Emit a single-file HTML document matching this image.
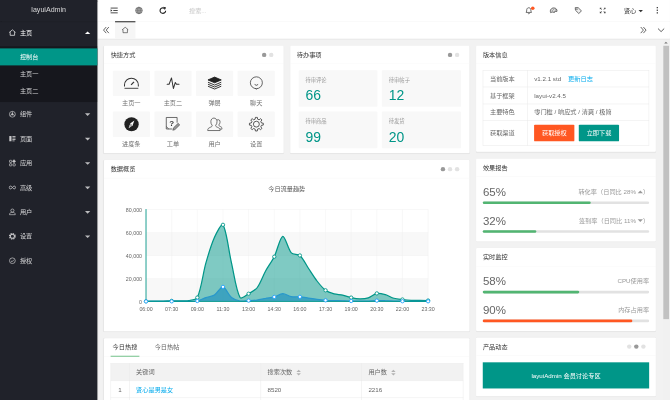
<!DOCTYPE html>
<html lang="zh-CN">
<head>
<meta charset="utf-8">
<title>layuiAdmin</title>
<style>
html,body{margin:0;padding:0;}
body{width:670px;height:400px;overflow:hidden;background:#f2f2f2;}
#app{position:absolute;left:0;top:0;width:1514px;height:918px;transform:scale(.4425,.436);transform-origin:0 0;overflow:hidden;filter:brightness(1);
 font-family:"Liberation Sans","Noto Sans CJK SC",sans-serif;font-size:14px;color:#666;line-height:24px;background:#f2f2f2;}
#app *{box-sizing:border-box;}
.abs{position:absolute;}
/* side */
#side{position:absolute;left:0;top:0;width:220px;height:918px;background:#20222A;color:rgba(255,255,255,.7);box-shadow:1px 0 2px rgba(0,0,0,.25);z-index:5;}
#logo{position:absolute;left:0;top:0;width:220px;height:49px;line-height:45px;text-align:center;font-size:16px;color:rgba(255,255,255,.8);box-shadow:0 1px 2px rgba(0,0,0,.15);}
.mi{position:absolute;left:0;width:220px;height:56px;line-height:56px;padding-left:45px;font-size:14px;color:rgba(255,255,255,.8);}
.mi svg{position:absolute;left:19px;top:19px;width:18px;height:18px;}
.mi .ar{position:absolute;right:16px;top:26px;width:0;height:0;border:6px solid transparent;border-top-color:rgba(255,255,255,.7);}
.mi .ar.up{top:19px;border-top-color:transparent;border-bottom-color:#fff;}
#child{position:absolute;left:0;top:106px;width:220px;height:128px;background:rgba(0,0,0,.3);}
.ci{position:absolute;left:0;width:220px;height:39px;line-height:39px;padding-left:45px;color:rgba(255,255,255,.8);}
.ci.on{background:#009688;color:#fff;}
/* header */
#header{position:absolute;left:220px;top:0;width:1294px;height:48.5px;background:#fff;border-bottom:1px solid #f6f6f6;}
.hi{position:absolute;top:13.5px;width:20px;height:20px;}
#tabs{position:absolute;left:220px;top:48.5px;width:1294px;height:40px;background:#fff;box-shadow:0 1px 2px 0 rgba(0,0,0,.1);z-index:3;}
/* cards */
.card{position:absolute;background:#fff;border-radius:2px;box-shadow:0 1px 2px 0 rgba(0,0,0,.05);}
.ch{position:absolute;left:0;top:0;right:0;height:42px;line-height:42px;padding:0 15px;border-bottom:1px solid #f6f6f6;color:#333;font-size:14px;}
.dots{position:absolute;top:16px;right:20px;height:10px;font-size:0;line-height:0;}
.dots i{display:inline-block;width:10px;height:10px;margin:0 3px;border-radius:50%;background:#e2e2e2;}
.dots i.on{background:#999;}
.tile{position:absolute;width:84.2px;height:58px;background:#f8f8f8;border-radius:2px;}
.tile svg{position:absolute;left:24px;top:11px;width:36px;height:36px;}
.tl{position:absolute;width:84.2px;height:24px;line-height:24px;text-align:center;color:#707070;font-size:14px;}
.bl{position:absolute;width:178.3px;height:84px;background:#f8f8f8;border-radius:2px;padding:10px 15px;color:#999;}
.bl h3{margin:0;padding:0 0 10px;font-size:12px;font-weight:normal;line-height:24px;color:#999;}
.bl p{margin:0;font-size:31.5px;line-height:29px;color:#009688;font-weight:300;}
table{border-collapse:collapse;border-spacing:0;}
#vt{position:absolute;left:15px;top:55.5px;width:375.7px;}
#vt td{border:1px solid #e6e6e6;padding:8px 15px;line-height:20px;font-size:14px;color:#666;height:38.5px;}
#vt a{color:#01AAED;text-decoration:none;}
.btn{display:inline-block;height:38px;line-height:38px;padding:0 17.5px;background:#009688;color:#fff;font-size:14px;border-radius:2px;vertical-align:middle;}
.btn.dg{background:#FF5722;}
.btn+.btn{margin-left:10px;}
.pg{position:absolute;left:15px;right:15px;height:6px;border-radius:20px;background:#e2e2e2;}
.pg b{position:absolute;left:0;top:0;height:6px;border-radius:20px;background:#52B572;}
.pt{position:absolute;left:15px;font-size:26px;line-height:26px;color:#666;}
.ph{position:absolute;right:15px;font-size:14px;line-height:24px;color:#999;}
.edge{display:inline-block;width:0;height:0;border:6px solid transparent;vertical-align:middle;}
.ax{font-size:12px;fill:#666;font-family:"Liberation Sans",sans-serif;}
.ttl{font-size:14px;fill:#555;font-family:"Liberation Sans","Noto Sans CJK SC",sans-serif;}
#ht{position:absolute;left:15px;top:57px;width:796.5px;}
#ht th,#ht td{border:1px solid #e6e6e6;height:39.6px;padding:0 15px;font-size:14px;color:#666;font-weight:normal;text-align:left;line-height:28px;}
#ht th{background:#f2f2f2;}
#ht a{color:#01AAED;text-decoration:none;}
.sort{display:inline-block;position:relative;width:10px;height:20px;margin-left:9px;vertical-align:middle;}
.sort:before,.sort:after{content:"";position:absolute;left:0;border:5px solid transparent;}
.sort:before{top:-2px;border-bottom-color:#b2b2b2;}
.sort:after{top:11px;border-top-color:#b2b2b2;}
</style>
</head>
<body>
<div id="app">

<!-- ============ SIDE ============ -->
<div id="side">
  <div id="logo">layuiAdmin</div>
  <div class="mi" style="top:47px;color:#fff">
    <svg viewBox="0 0 18 18" fill="none" stroke="#fff" stroke-width="1.6" stroke-linejoin="round"><path d="M9 2.5 15.5 8 14 8 14 15 4 15 4 8 2.5 8Z"/></svg>
    主页<span class="ar up"></span></div>
  <div id="child">
    <div class="ci on" style="top:4.5px">控制台</div>
    <div class="ci" style="top:44px">主页一</div>
    <div class="ci" style="top:83px">主页二</div>
  </div>
  <div class="mi" style="top:234px">
    <svg viewBox="0 0 18 18" fill="none" stroke="#c8c8ca" stroke-width="1.5"><circle cx="9" cy="9" r="6.7"/><path d="M9 9 9 2.5M9 9 3.2 12.2M9 9 14.8 12.2"/><circle cx="9" cy="9" r="1.8" fill="#c8c8ca"/></svg>
    组件<span class="ar"></span></div>
  <div class="mi" style="top:290px">
    <svg viewBox="0 0 18 18" fill="#c8c8ca"><rect x="2" y="3" width="5" height="12"/><rect x="9" y="3" width="7" height="2"/><rect x="9" y="6.5" width="7" height="2"/><rect x="9" y="10" width="7" height="2"/><rect x="9" y="13.3" width="5" height="1.7"/></svg>
    页面<span class="ar"></span></div>
  <div class="mi" style="top:346px">
    <svg viewBox="0 0 18 18" fill="none" stroke="#c8c8ca" stroke-width="1.6"><rect x="2.5" y="2.5" width="5" height="5" rx="1"/><rect x="2.5" y="10.5" width="5" height="5" rx="1"/><rect x="10.5" y="10.5" width="5" height="5" rx="1"/><rect x="10.2" y="2.2" width="5" height="5" rx="1" transform="rotate(45 12.7 4.7)" fill="#c8c8ca"/></svg>
    应用<span class="ar"></span></div>
  <div class="mi" style="top:402px">
    <svg viewBox="0 0 18 18" fill="none" stroke="#c8c8ca" stroke-width="1.9"><path d="M9 9C7.6 6.8 6.4 5.8 4.8 5.8 3 5.8 1.8 7.2 1.8 9 1.8 10.800000000000001 3 12.2 4.8 12.2 6.4 12.2 7.6 11.2 9 9 10.4 6.8 11.6 5.8 13.2 5.8 15 5.8 16.2 7.2 16.2 9 16.2 10.8 15 12.2 13.2 12.2 11.6 12.2 10.4 11.2 9 9Z"/></svg>
    高级<span class="ar"></span></div>
  <div class="mi" style="top:458px">
    <svg viewBox="0 0 18 18" fill="none" stroke="#c8c8ca" stroke-width="1.6"><circle cx="9" cy="6" r="3.6"/><path d="M2.5 15.5 C2.5 11 5.5 10 9 10 C12.5 10 15.5 11 15.5 15.5Z"/></svg>
    用户<span class="ar"></span></div>
  <div class="mi" style="top:514px">
    <svg viewBox="0 0 18 18" fill="none" stroke="#c8c8ca"><circle cx="9" cy="9" r="6.6" stroke-width="2.4" stroke-dasharray="2.9 2.283"/><circle cx="9" cy="9" r="4.7" stroke-width="2.3"/></svg>
    设置<span class="ar"></span></div>
  <div class="mi" style="top:570px">
    <svg viewBox="0 0 18 18" fill="none" stroke="#c8c8ca" stroke-width="1.6"><circle cx="9" cy="9" r="6.5"/><path d="M5.8 9.2 8.2 11.5 12.4 6.8"/></svg>
    授权</div>
</div>

<!-- ============ HEADER ============ -->
<div id="header">
  <!-- flexible -->
  <svg class="hi" style="left:28px" viewBox="0 0 20 20" fill="#333"><rect x="2" y="3.5" width="16" height="2"/><rect x="8" y="9" width="10" height="2"/><rect x="2" y="14.5" width="16" height="2"/><path d="M2 7.2 6 10 2 12.8Z"/></svg>
  <!-- website -->
  <svg class="hi" style="left:84px" viewBox="0 0 20 20" fill="none" stroke="#555" stroke-width="1"><circle cx="10" cy="10" r="7.6" fill="#c4c4c4" stroke-width="1.3"/><ellipse cx="10" cy="10" rx="3.6" ry="7.5"/><path d="M2.5 10H17.5M3.5 6.3H16.5M3.5 13.7H16.5M10 2.5V17.5"/></svg>
  <!-- refresh -->
  <svg class="hi" style="left:138px" viewBox="0 0 20 20" fill="none" stroke="#222" stroke-width="2.5"><path d="M16.3 10.5A6.3 6.3 0 1 1 13 4.8"/><path d="M10.8 1.4 17.4 3 14.4 9Z" fill="#222" stroke="none"/></svg>
  <div class="abs" style="left:207px;top:13px;font-size:14px;color:#c8c8c8;line-height:24px">搜索...</div>

  <!-- notice -->
  <svg class="hi" style="left:965px" viewBox="0 0 20 20" fill="none" stroke="#333" stroke-width="1.6"><path d="M4 14.5C5.5 13 5 10 5.5 7.5 6 5 8 3.8 10 3.8 12 3.8 14 5 14.5 7.5 15 10 14.5 13 16 14.5Z" stroke-linejoin="round"/><path d="M8 16.8Q10 18.5 12 16.8"/></svg>
  <div class="abs" style="left:979.5px;top:15px;width:8px;height:8px;border-radius:50%;background:#FF5722"></div>
  <!-- theme -->
  <svg class="hi" style="left:1021px" viewBox="0 0 20 20" fill="none" stroke="#333" stroke-width="1.6"><path d="M3.4 15C1 9 5 4.2 10.5 4.2 15.5 4.2 18.6 8 17.6 12.2L13 11.6 12 14.6 6.6 13.4Z" fill="#ddd" stroke-linejoin="round"/><circle cx="7" cy="9.6" r=".9" fill="#333" stroke="none"/><circle cx="10.4" cy="7.4" r=".9" fill="#333" stroke="none"/><circle cx="14" cy="8.6" r=".9" fill="#333" stroke="none"/></svg>
  <!-- note -->
  <svg class="hi" style="left:1077px" viewBox="0 0 20 20" fill="none" stroke="#333" stroke-width="1.6" stroke-linejoin="round"><path d="M3 3.5H9.5L17 11 11 17 3.5 9.5Z" fill="#eee"/><circle cx="6.8" cy="7" r="1.1" fill="#fff" stroke-width="1.2"/></svg>
  <!-- fullscreen -->
  <svg class="hi" style="left:1132px" viewBox="0 0 20 20" fill="#444"><path d="M3.5 3.5H7.5L6.2 4.8 8.4 7 7 8.4 4.8 6.2 3.5 7.5Z"/><path d="M16.5 3.5V7.5L15.2 6.2 13 8.4 11.6 7 13.8 4.8 12.5 3.5Z"/><path d="M3.5 16.5V12.5L4.8 13.8 7 11.6 8.4 13 6.2 15.2 7.5 16.5Z"/><path d="M16.5 16.5H12.5L13.8 15.2 11.6 13 13 11.6 15.2 13.8 16.5 12.5Z"/></svg>
  <div class="abs" style="left:1190px;top:13px;font-size:14px;color:#333;line-height:24px">贤心</div>
  <div class="abs" style="left:1223px;top:23px;width:0;height:0;border:5px solid transparent;border-top-color:#333"></div>
  <div class="abs" style="left:1264.2px;top:16px;width:2.6px;height:2.6px;background:#444;box-shadow:0 6px 0 #444,0 12px 0 #444"></div>
</div>

<!-- ============ TABS ============ -->
<div id="tabs">
  <svg class="abs" style="left:11px;top:11px;width:18px;height:18px" viewBox="0 0 18 18" fill="none" stroke="#333" stroke-width="1.7"><path d="M9 2 3 9 9 16M15 2 9 9 15 16"/></svg>
  <div class="abs" style="left:40px;top:0;width:46px;height:40px;background:#f6f6f6;border-top:2px solid #000"></div>
  <svg class="abs" style="left:54px;top:11px;width:18px;height:18px" viewBox="0 0 18 18" fill="none" stroke="#333" stroke-width="1.4" stroke-linejoin="round"><path d="M9 2.5 15.5 8 14 8 14 15 4 15 4 8 2.5 8Z"/></svg>
  <svg class="abs" style="left:1225px;top:11px;width:18px;height:18px" viewBox="0 0 18 18" fill="none" stroke="#333" stroke-width="1.7"><path d="M3 2 9 9 3 16M9 2 15 9 9 16"/></svg>
  <svg class="abs" style="left:1265px;top:11px;width:18px;height:18px" viewBox="0 0 18 18" fill="none" stroke="#333" stroke-width="1.8"><path d="M2 5.5 9 12.5 16 5.5"/></svg>
</div>

<!-- ============ BODY ============ -->
<!-- card1 shortcuts -->
<div class="card" style="left:235px;top:105px;width:405.7px;height:245.5px">
  <div class="ch">快捷方式<span class="dots"><i class="on"></i><i></i></span></div>
  <div class="tile" style="left:19.5px;top:56.5px"><svg viewBox="0 0 30 30" fill="none" stroke="#333" stroke-width="1.9"><path d="M2 21.3V18.3A13 13 0 0 1 28 18.3V21.3"/><path d="M2 24.6H28" stroke-width="1.7"/><path d="M14.4 18.2 19.8 12.2" stroke-width="2.3"/></svg></div>
  <div class="tile" style="left:113.7px;top:56.5px"><svg viewBox="0 0 30 30" fill="none" stroke="#333" stroke-width="1.9" stroke-linejoin="round" stroke-linecap="round"><path d="M3.8 16.9H7.6L12.1 4.8 15.7 25 19.3 13.3 21.5 16.9H26.4"/></svg></div>
  <div class="tile" style="left:207.9px;top:56.5px"><svg viewBox="0 0 30 30" fill="none" stroke="#222" stroke-width="1.7" stroke-linejoin="round"><path d="M15 3.2 27.5 8.6 15 14 2.5 8.6Z" fill="#222"/><path d="M2.5 13 15 18.4 27.5 13M2.5 16.8 15 22.2 27.5 16.8M2.5 20.6 15 26 27.5 20.6"/></svg></div>
  <div class="tile" style="left:302.1px;top:56.5px"><svg viewBox="0 0 30 30" fill="none" stroke="#333" stroke-width="1.4"><circle cx="15.3" cy="14" r="11.3"/><path d="M13.6 24.8 15.3 26.6 17 24.8" stroke-width="1.2"/><path d="M12 17.2Q15.3 20.6 18.6 17.2" stroke-width="1.5"/></svg></div>
  <div class="tl" style="left:19.5px;top:118px">主页一</div>
  <div class="tl" style="left:113.7px;top:118px">主页二</div>
  <div class="tl" style="left:207.9px;top:118px">弹层</div>
  <div class="tl" style="left:302.1px;top:118px">聊天</div>

  <div class="tile" style="left:19.5px;top:151px"><svg viewBox="0 0 30 30"><circle cx="15.2" cy="15" r="13.5" fill="#222"/><path d="M20.6 7.6 17.3 17.1 9.8 22.4 13.1 12.9Z" fill="#fff"/><path d="M13.1 12.9 17.3 17.1 9.8 22.4Z" fill="#aaa"/></svg></div>
  <div class="tile" style="left:113.7px;top:151px"><svg viewBox="0 0 30 30" fill="none" stroke="#444" stroke-width="1.5" stroke-linejoin="round"><path d="M22.7 12V2H2.3V24H7L2.3 19.5M7 24H13"/><path d="M14.6 26.4 15.6 22.2 24.6 13.2 27.6 16.2 18.6 25.2Z" fill="#999" stroke-width="1.2"/><text x="8" y="18" font-size="15" font-family="Liberation Sans,sans-serif" font-weight="bold" fill="#333" stroke="none">?</text></svg></div>
  <div class="tile" style="left:207.9px;top:151px"><svg viewBox="0 0 30 30" fill="none" stroke="#444" stroke-width="1.4" stroke-linejoin="round"><path d="M19.5 7C22.6 4.8 26 7.4 25.2 11.4 24.8 13.8 24 15.2 23 16.1 22.8 17.5 23.4 18.2 25.8 19.3 28.4 20.4 29.2 21.6 29.2 24.2H25"/><path d="M2 27C2 23.4 3.2 22.5 7.2 20.7 10.1 19.4 10.8 18.5 10.3 16.9 8.8 15.3 7.9 13.1 7.9 10.2 7.9 5.9 10.3 3.2 13.7 3.2 17.1 3.2 19.5 5.9 19.5 10.2 19.5 13.1 18.6 15.3 17.1 16.9 16.6 18.5 17.3 19.4 20.2 20.7 24.2 22.5 25.4 23.4 25.4 27Z"/></svg></div>
  <div class="tile" style="left:302.1px;top:151px"><svg viewBox="0 0 30 30" fill="none" stroke="#333" stroke-width="1.5" stroke-linejoin="round"><circle cx="15.3" cy="14.8" r="5.6"/><path d="M13.01 5.27L13.54 1.72L17.06 1.72L17.59 5.27L20.42 6.44L23.31 4.31L25.79 6.79L23.66 9.68L24.83 12.51L28.38 13.04L28.38 16.56L24.83 17.09L23.66 19.92L25.79 22.81L23.31 25.29L20.42 23.16L17.59 24.33L17.06 27.88L13.54 27.88L13.01 24.33L10.18 23.16L7.29 25.29L4.81 22.81L6.94 19.92L5.77 17.09L2.22 16.56L2.22 13.04L5.77 12.51L6.94 9.68L4.81 6.79L7.29 4.31L10.18 6.44Z"/></svg></div>
  <div class="tl" style="left:19.5px;top:212px">进度条</div>
  <div class="tl" style="left:113.7px;top:212px">工单</div>
  <div class="tl" style="left:207.9px;top:212px">用户</div>
  <div class="tl" style="left:302.1px;top:212px">设置</div>
</div>

<!-- card2 backlog -->
<div class="card" style="left:655.7px;top:105px;width:405.6px;height:245.5px">
  <div class="ch">待办事项<span class="dots"><i class="on"></i><i></i></span></div>
  <div class="bl" style="left:19.5px;top:56px"><h3>待审评论</h3><p>66</p></div>
  <div class="bl" style="left:207.8px;top:56px"><h3>待审帖子</h3><p>12</p></div>
  <div class="bl" style="left:19.5px;top:150.5px"><h3>待审商品</h3><p>99</p></div>
  <div class="bl" style="left:207.8px;top:150.5px"><h3>待发货</h3><p>20</p></div>
</div>

<!-- card3 version -->
<div class="card" style="left:1076.3px;top:105px;width:405.7px;height:243px">
  <div class="ch">版本信息</div>
  <table id="vt">
    <colgroup><col style="width:100px"><col></colgroup>
    <tr><td>当前版本</td><td>v1.2.1 std <a style="margin-left:12px">更新日志</a></td></tr>
    <tr><td>基于框架</td><td>layui-v2.4.5</td></tr>
    <tr><td>主要特色</td><td>零门槛 / 响应式 / 清爽 / 极简</td></tr>
    <tr><td style="height:57px">获取渠道</td><td style="height:57px"><span class="btn dg">获取授权</span><span class="btn">立即下载</span></td></tr>
  </table>
</div>

<!-- card4 report -->
<div class="card" style="left:1076.3px;top:364px;width:405.7px;height:190px">
  <div class="ch">效果报告</div>
  <div class="pt" style="top:63px">65%</div>
  <div class="ph" style="top:64px">转化率（日同比 28% <span class="edge" style="border-bottom-color:#999;margin-top:-8px"></span>）</div>
  <div class="pg" style="top:98px"><b style="width:65%"></b></div>
  <div class="pt" style="top:128.5px">32%</div>
  <div class="ph" style="top:129.5px">签到率（日同比 11% <span class="edge" style="border-top-color:#999;margin-top:4px"></span>）</div>
  <div class="pg" style="top:163.5px"><b style="width:32%"></b></div>
</div>

<!-- card5 monitor -->
<div class="card" style="left:1076.3px;top:569px;width:405.7px;height:190px">
  <div class="ch">实时监控</div>
  <div class="pt" style="top:63px">58%</div>
  <div class="ph" style="top:64px">CPU使用率</div>
  <div class="pg" style="top:98px"><b style="width:58%"></b></div>
  <div class="pt" style="top:128.5px">90%</div>
  <div class="ph" style="top:129.5px">内存占用率</div>
  <div class="pg" style="top:163.5px"><b style="width:90%;background:#FF5722"></b></div>
</div>

<!-- card6 news -->
<div class="card" style="left:1076.3px;top:774px;width:405.7px;height:134.5px">
  <div class="ch">产品动态<span class="dots"><i></i><i class="on"></i><i></i></span></div>
  <div class="abs" style="left:15px;right:15px;top:57px;height:60px;line-height:60px;text-align:center;background:#009688;color:#fff;font-size:14px">layuiAdmin 会员讨论专区</div>
</div>

<!-- card7 chart -->
<div class="card" style="left:235px;top:367px;width:826.3px;height:393px">
  <div class="ch">数据概览<span class="dots"><i class="on"></i><i></i><i></i></span></div>
</div>
<svg class="abs" style="left:0;top:0;width:1514px;height:918px;pointer-events:none" viewBox="0 0 1514 918">
<rect x="330.0" y="638.6" width="637.5" height="52.7" fill="#f8f8f8"/>
<rect x="330.0" y="585.9" width="637.5" height="52.7" fill="#ffffff"/>
<rect x="330.0" y="533.2" width="637.5" height="52.7" fill="#f8f8f8"/>
<rect x="330.0" y="480.5" width="637.5" height="52.7" fill="#ffffff"/>
<line x1="330.0" y1="638.6" x2="967.5" y2="638.6" stroke="#eee" stroke-width="1"/>
<line x1="330.0" y1="585.9" x2="967.5" y2="585.9" stroke="#eee" stroke-width="1"/>
<line x1="330.0" y1="533.2" x2="967.5" y2="533.2" stroke="#eee" stroke-width="1"/>
<line x1="330.0" y1="480.5" x2="967.5" y2="480.5" stroke="#eee" stroke-width="1"/>
<line x1="330.0" y1="480.5" x2="330.0" y2="691.3" stroke="#eee" stroke-width="1"/>
<line x1="388.0" y1="480.5" x2="388.0" y2="691.3" stroke="#eee" stroke-width="1"/>
<line x1="445.9" y1="480.5" x2="445.9" y2="691.3" stroke="#eee" stroke-width="1"/>
<line x1="503.9" y1="480.5" x2="503.9" y2="691.3" stroke="#eee" stroke-width="1"/>
<line x1="561.8" y1="480.5" x2="561.8" y2="691.3" stroke="#eee" stroke-width="1"/>
<line x1="619.8" y1="480.5" x2="619.8" y2="691.3" stroke="#eee" stroke-width="1"/>
<line x1="677.7" y1="480.5" x2="677.7" y2="691.3" stroke="#eee" stroke-width="1"/>
<line x1="735.7" y1="480.5" x2="735.7" y2="691.3" stroke="#eee" stroke-width="1"/>
<line x1="793.6" y1="480.5" x2="793.6" y2="691.3" stroke="#eee" stroke-width="1"/>
<line x1="851.6" y1="480.5" x2="851.6" y2="691.3" stroke="#eee" stroke-width="1"/>
<line x1="909.5" y1="480.5" x2="909.5" y2="691.3" stroke="#eee" stroke-width="1"/>
<line x1="967.5" y1="480.5" x2="967.5" y2="691.3" stroke="#eee" stroke-width="1"/>
<path d="M330.0 691.0C330.0 691.0 343.5 690.8 349.3 690.7C355.1 690.6 362.8 690.5 368.6 690.4C374.4 690.3 382.2 690.2 388.0 690.1C393.8 690.0 401.5 689.9 407.3 689.8C413.1 689.7 421.0 690.6 426.6 689.5C432.6 688.4 443.6 687.7 445.9 682.5C455.2 661.9 458.6 627.0 465.2 603.5C470.2 585.7 477.2 561.7 484.5 544.9C488.7 535.4 500.6 510.7 503.9 515.6C512.2 528.3 517.1 577.2 523.2 603.5C528.7 627.2 533.3 665.8 542.5 682.5C544.9 686.9 556.3 676.9 561.8 673.7C567.9 670.2 577.0 665.6 581.1 660.0C588.6 649.7 594.2 632.5 600.5 621.0C605.8 611.1 614.8 598.9 619.8 588.8C626.4 575.2 632.8 543.4 639.1 542.0C644.4 540.8 650.5 571.1 658.4 580.0C662.1 584.3 673.5 582.1 677.7 585.9C685.1 592.6 691.2 606.4 697.0 615.2C702.8 624.0 710.0 636.1 716.4 644.5C721.6 651.3 729.0 660.7 735.7 665.8C740.6 669.6 749.0 672.3 755.0 674.0C760.6 675.6 768.6 675.4 774.3 676.7C780.2 678.0 787.7 681.2 793.6 682.5C799.3 683.8 807.1 685.4 813.0 685.4C818.7 685.5 826.8 684.9 832.3 683.1C838.4 681.1 845.5 674.0 851.6 672.9C857.1 671.8 865.3 674.2 870.9 675.8C876.9 677.5 884.2 682.3 890.2 684.0C895.8 685.6 903.7 686.2 909.5 686.9C915.3 687.6 923.1 688.4 928.9 688.7C934.6 689.0 942.4 688.9 948.2 689.0C954.0 689.0 967.5 689.3 967.5 689.3L967.5 691.3L330.0 691.3Z" fill="rgba(0,150,136,0.5)" stroke="none"/>
<path d="M330.0 691.0C330.0 691.0 343.5 690.8 349.3 690.7C355.1 690.6 362.8 690.5 368.6 690.4C374.4 690.3 382.2 690.2 388.0 690.1C393.8 690.0 401.5 689.9 407.3 689.8C413.1 689.7 421.0 690.6 426.6 689.5C432.6 688.4 443.6 687.7 445.9 682.5C455.2 661.9 458.6 627.0 465.2 603.5C470.2 585.7 477.2 561.7 484.5 544.9C488.7 535.4 500.6 510.7 503.9 515.6C512.2 528.3 517.1 577.2 523.2 603.5C528.7 627.2 533.3 665.8 542.5 682.5C544.9 686.9 556.3 676.9 561.8 673.7C567.9 670.2 577.0 665.6 581.1 660.0C588.6 649.7 594.2 632.5 600.5 621.0C605.8 611.1 614.8 598.9 619.8 588.8C626.4 575.2 632.8 543.4 639.1 542.0C644.4 540.8 650.5 571.1 658.4 580.0C662.1 584.3 673.5 582.1 677.7 585.9C685.1 592.6 691.2 606.4 697.0 615.2C702.8 624.0 710.0 636.1 716.4 644.5C721.6 651.3 729.0 660.7 735.7 665.8C740.6 669.6 749.0 672.3 755.0 674.0C760.6 675.6 768.6 675.4 774.3 676.7C780.2 678.0 787.7 681.2 793.6 682.5C799.3 683.8 807.1 685.4 813.0 685.4C818.7 685.5 826.8 684.9 832.3 683.1C838.4 681.1 845.5 674.0 851.6 672.9C857.1 671.8 865.3 674.2 870.9 675.8C876.9 677.5 884.2 682.3 890.2 684.0C895.8 685.6 903.7 686.2 909.5 686.9C915.3 687.6 923.1 688.4 928.9 688.7C934.6 689.0 942.4 688.9 948.2 689.0C954.0 689.0 967.5 689.3 967.5 689.3" fill="none" stroke="#009688" stroke-width="2.8"/>
<path d="M330.0 691.3C330.0 691.3 343.5 691.3 349.3 691.2C355.1 691.2 362.8 691.2 368.6 691.2C374.4 691.2 382.2 691.2 388.0 691.2C393.8 691.2 401.5 691.2 407.3 691.2C413.1 691.1 420.8 691.2 426.6 691.1C432.4 691.0 440.3 691.3 445.9 690.4C451.9 689.1 459.3 684.6 465.2 682.5C470.9 680.5 479.6 679.8 484.5 676.7C491.2 672.4 498.5 657.1 503.9 657.9C510.1 658.9 516.2 676.7 523.2 682.5C527.8 686.4 536.5 689.3 542.5 690.4C548.1 691.3 556.0 689.9 561.8 689.5C567.6 689.2 575.4 689.0 581.1 688.2C587.0 687.4 594.6 685.3 600.5 684.3C606.2 683.2 614.1 682.6 619.8 681.1C625.7 679.4 633.3 673.9 639.1 673.7C644.8 673.6 652.5 679.1 658.4 680.2C664.1 681.2 672.0 680.2 677.7 680.8C683.6 681.3 691.2 682.8 697.0 683.7C702.8 684.6 710.6 685.9 716.4 686.6C722.1 687.4 729.9 688.3 735.7 688.8C741.5 689.2 749.2 689.4 755.0 689.6C760.8 689.7 768.5 689.7 774.3 689.8C780.1 690.0 787.8 690.3 793.6 690.4C799.4 690.6 807.2 690.7 813.0 690.7C818.7 690.7 826.5 690.7 832.3 690.5C838.1 690.3 845.8 689.6 851.6 689.5C857.4 689.3 865.1 689.6 870.9 689.8C876.7 689.9 884.4 690.4 890.2 690.6C896.0 690.7 903.7 690.8 909.5 690.9C915.3 690.9 923.1 691.0 928.9 691.0C934.7 691.1 942.4 691.1 948.2 691.1C954.0 691.1 967.5 691.1 967.5 691.1L967.5 691.3L330.0 691.3Z" fill="rgba(0,128,190,0.5)" stroke="none"/>
<path d="M330.0 691.3C330.0 691.3 343.5 691.3 349.3 691.2C355.1 691.2 362.8 691.2 368.6 691.2C374.4 691.2 382.2 691.2 388.0 691.2C393.8 691.2 401.5 691.2 407.3 691.2C413.1 691.1 420.8 691.2 426.6 691.1C432.4 691.0 440.3 691.3 445.9 690.4C451.9 689.1 459.3 684.6 465.2 682.5C470.9 680.5 479.6 679.8 484.5 676.7C491.2 672.4 498.5 657.1 503.9 657.9C510.1 658.9 516.2 676.7 523.2 682.5C527.8 686.4 536.5 689.3 542.5 690.4C548.1 691.3 556.0 689.9 561.8 689.5C567.6 689.2 575.4 689.0 581.1 688.2C587.0 687.4 594.6 685.3 600.5 684.3C606.2 683.2 614.1 682.6 619.8 681.1C625.7 679.4 633.3 673.9 639.1 673.7C644.8 673.6 652.5 679.1 658.4 680.2C664.1 681.2 672.0 680.2 677.7 680.8C683.6 681.3 691.2 682.8 697.0 683.7C702.8 684.6 710.6 685.9 716.4 686.6C722.1 687.4 729.9 688.3 735.7 688.8C741.5 689.2 749.2 689.4 755.0 689.6C760.8 689.7 768.5 689.7 774.3 689.8C780.1 690.0 787.8 690.3 793.6 690.4C799.4 690.6 807.2 690.7 813.0 690.7C818.7 690.7 826.5 690.7 832.3 690.5C838.1 690.3 845.8 689.6 851.6 689.5C857.4 689.3 865.1 689.6 870.9 689.8C876.7 689.9 884.4 690.4 890.2 690.6C896.0 690.7 903.7 690.8 909.5 690.9C915.3 690.9 923.1 691.0 928.9 691.0C934.7 691.1 942.4 691.1 948.2 691.1C954.0 691.1 967.5 691.1 967.5 691.1" fill="none" stroke="#2898cc" stroke-width="2.8"/>
<line x1="330.0" y1="479.5" x2="330.0" y2="692.3" stroke="#009688" stroke-width="2"/>
<line x1="329.0" y1="691.3" x2="968.5" y2="691.3" stroke="#009688" stroke-width="2"/>
<circle cx="330.0" cy="691.0" r="3.8" fill="#fff" stroke="#009688" stroke-width="2"/>
<circle cx="388.0" cy="690.1" r="3.8" fill="#fff" stroke="#009688" stroke-width="2"/>
<circle cx="445.9" cy="682.5" r="3.8" fill="#fff" stroke="#009688" stroke-width="2"/>
<circle cx="503.9" cy="515.6" r="3.8" fill="#fff" stroke="#009688" stroke-width="2"/>
<circle cx="561.8" cy="673.7" r="3.8" fill="#fff" stroke="#009688" stroke-width="2"/>
<circle cx="619.8" cy="588.8" r="3.8" fill="#fff" stroke="#009688" stroke-width="2"/>
<circle cx="677.7" cy="585.9" r="3.8" fill="#fff" stroke="#009688" stroke-width="2"/>
<circle cx="735.7" cy="665.8" r="3.8" fill="#fff" stroke="#009688" stroke-width="2"/>
<circle cx="793.6" cy="682.5" r="3.8" fill="#fff" stroke="#009688" stroke-width="2"/>
<circle cx="851.6" cy="672.9" r="3.8" fill="#fff" stroke="#009688" stroke-width="2"/>
<circle cx="909.5" cy="686.9" r="3.8" fill="#fff" stroke="#009688" stroke-width="2"/>
<circle cx="967.5" cy="689.3" r="3.8" fill="#fff" stroke="#009688" stroke-width="2"/>
<circle cx="330.0" cy="691.3" r="3.8" fill="#fff" stroke="#1E9FFF" stroke-width="2"/>
<circle cx="388.0" cy="691.2" r="3.8" fill="#fff" stroke="#1E9FFF" stroke-width="2"/>
<circle cx="445.9" cy="690.4" r="3.8" fill="#fff" stroke="#1E9FFF" stroke-width="2"/>
<circle cx="503.9" cy="657.9" r="3.8" fill="#fff" stroke="#1E9FFF" stroke-width="2"/>
<circle cx="561.8" cy="689.5" r="3.8" fill="#fff" stroke="#1E9FFF" stroke-width="2"/>
<circle cx="619.8" cy="681.1" r="3.8" fill="#fff" stroke="#1E9FFF" stroke-width="2"/>
<circle cx="677.7" cy="680.8" r="3.8" fill="#fff" stroke="#1E9FFF" stroke-width="2"/>
<circle cx="735.7" cy="688.8" r="3.8" fill="#fff" stroke="#1E9FFF" stroke-width="2"/>
<circle cx="793.6" cy="690.4" r="3.8" fill="#fff" stroke="#1E9FFF" stroke-width="2"/>
<circle cx="851.6" cy="689.5" r="3.8" fill="#fff" stroke="#1E9FFF" stroke-width="2"/>
<circle cx="909.5" cy="690.9" r="3.8" fill="#fff" stroke="#1E9FFF" stroke-width="2"/>
<circle cx="967.5" cy="691.1" r="3.8" fill="#fff" stroke="#1E9FFF" stroke-width="2"/>
<text x="330.0" y="713.3" text-anchor="middle" class="ax">06:00</text>
<text x="388.0" y="713.3" text-anchor="middle" class="ax">07:30</text>
<text x="445.9" y="713.3" text-anchor="middle" class="ax">09:00</text>
<text x="503.9" y="713.3" text-anchor="middle" class="ax">11:30</text>
<text x="561.8" y="713.3" text-anchor="middle" class="ax">13:00</text>
<text x="619.8" y="713.3" text-anchor="middle" class="ax">14:30</text>
<text x="677.7" y="713.3" text-anchor="middle" class="ax">16:00</text>
<text x="735.7" y="713.3" text-anchor="middle" class="ax">17:30</text>
<text x="793.6" y="713.3" text-anchor="middle" class="ax">19:00</text>
<text x="851.6" y="713.3" text-anchor="middle" class="ax">20:30</text>
<text x="909.5" y="713.3" text-anchor="middle" class="ax">22:00</text>
<text x="967.5" y="713.3" text-anchor="middle" class="ax">23:30</text>
<text x="321.0" y="697.3" text-anchor="end" class="ax">0</text>
<text x="321.0" y="644.6" text-anchor="end" class="ax">20,000</text>
<text x="321.0" y="591.9" text-anchor="end" class="ax">40,000</text>
<text x="321.0" y="539.2" text-anchor="end" class="ax">60,000</text>
<text x="321.0" y="486.5" text-anchor="end" class="ax">80,000</text>
<text x="648.1" y="438" text-anchor="middle" class="ttl">今日流量趋势</text>
</svg>

<!-- card8 hot -->
<div class="card" style="left:235px;top:776px;width:826.3px;height:160px">
  <div class="abs" style="left:0;right:0;top:0;height:42px;border-bottom:1px solid #f6f6f6"></div>
  <div class="abs" style="left:15px;top:0;width:65px;height:42px;line-height:40px;text-align:center;color:#333;border-bottom:2px solid #5FB878">今日热搜</div>
  <div class="abs" style="left:110px;top:0;width:65px;height:42px;line-height:40px;text-align:center;color:#666">今日热帖</div>
  <table id="ht">
    <colgroup><col style="width:41.5px"><col style="width:297px"><col style="width:228px"><col></colgroup>
    <tr><th></th><th>关键词</th><th>搜索次数<span class="sort"></span></th><th>用户数<span class="sort"></span></th></tr>
    <tr><td style="text-align:center;padding:0">1</td><td><a>贤心是男是女</a></td><td>8520</td><td>2216</td></tr>
    <tr><td style="text-align:center;padding:0">2</td><td><a>Java程序员能找到女朋友吗</a></td><td>4322</td><td>1872</td></tr>
  </table>
</div>

<!-- scrollbar -->
<div class="abs" style="left:1497px;top:88.5px;width:17px;height:830px;background:#f1f1f1"></div>
<div class="abs" style="left:1498.5px;top:104.5px;width:13px;height:627px;background:#c1c1c1"></div>
<div class="abs" style="left:1501px;top:91.5px;width:0;height:0;border:4px solid transparent;border-bottom-color:#777"></div>

</div>
</body>
</html>
